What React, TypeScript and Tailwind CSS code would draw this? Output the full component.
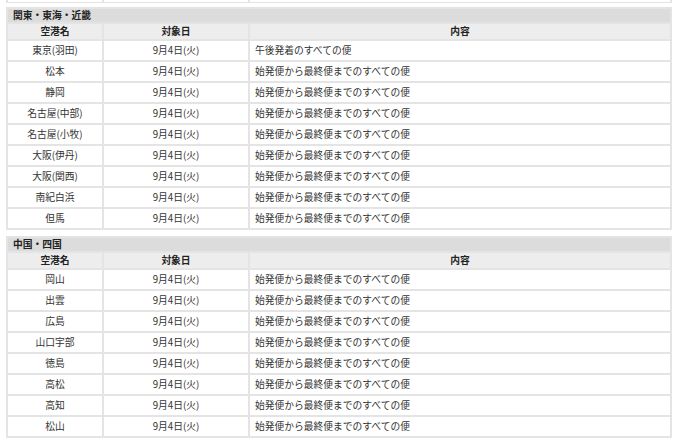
const font = { fontFamily: '"Noto Sans CJK JP", "Noto Sans", sans-serif' };

type Region = { name: string; rows: { airport: string; content: string }[] };

const all = "始発便から最終便までのすべての便";

const regions: Region[] = [
  {
    name: "関東・東海・近畿",
    rows: [
      { airport: "東京(羽田)", content: "午後発着のすべての便" },
      { airport: "松本", content: all },
      { airport: "静岡", content: all },
      { airport: "名古屋(中部)", content: all },
      { airport: "名古屋(小牧)", content: all },
      { airport: "大阪(伊丹)", content: all },
      { airport: "大阪(関西)", content: all },
      { airport: "南紀白浜", content: all },
      { airport: "但馬", content: all },
    ],
  },
  {
    name: "中国・四国",
    rows: [
      { airport: "岡山", content: all },
      { airport: "出雲", content: all },
      { airport: "広島", content: all },
      { airport: "山口宇部", content: all },
      { airport: "徳島", content: all },
      { airport: "高松", content: all },
      { airport: "高知", content: all },
      { airport: "松山", content: all },
    ],
  },
];

function Cols() {
  return (
    <colgroup>
      <col className="w-[96px]" />
      <col className="w-[146px]" />
      <col />
    </colgroup>
  );
}

function RegionTable({ region }: { region: Region }) {
  return (
    <table className="w-[666px] table-fixed border-collapse text-[9.75px] text-[#333]">
      <Cols />
      <thead>
        <tr className="h-[15px] bg-[#dcdcdc]">
          <th colSpan={3} className="border-2 border-[#e4e4e4] px-[5px] py-0 text-left font-bold leading-none text-[#222]">
            {region.name}
          </th>
        </tr>
        <tr className="h-[17px] bg-[#ededed]">
          <th className="border-2 border-[#e4e4e4] p-0 font-bold leading-none text-[#222]">空港名</th>
          <th className="border-2 border-[#e4e4e4] p-0 font-bold leading-none text-[#222]">対象日</th>
          <th className="border-2 border-[#e4e4e4] p-0 font-bold leading-none text-[#222]">内容</th>
        </tr>
      </thead>
      <tbody>
        {region.rows.map((r) => (
          <tr key={r.airport} className="h-[21px] bg-white">
            <td className="border-2 border-[#e4e4e4] p-0 text-center leading-none">{r.airport}</td>
            <td className="border-2 border-[#e4e4e4] p-0 text-center leading-none">9月4日(火)</td>
            <td className="border-2 border-[#e4e4e4] py-0 pl-[5px] leading-none">{r.content}</td>
          </tr>
        ))}
      </tbody>
    </table>
  );
}

export default function App() {
  return (
    <div className="h-[444px] w-[680px] overflow-hidden bg-white" style={font}>
      {/* tail of the previous table */}
      <div className="ml-[6px] h-[3px] overflow-hidden">
        <table className="-mt-[19px] w-[666px] table-fixed border-collapse">
          <Cols />
          <tbody>
            <tr className="h-[21px]">
              <td className="border-2 border-[#e4e4e4]" />
              <td className="border-2 border-[#e4e4e4]" />
              <td className="border-2 border-[#e4e4e4]" />
            </tr>
          </tbody>
        </table>
      </div>
      <div className="ml-[6px] mt-[4px] flex flex-col gap-[6px]">
        {regions.map((r) => (
          <RegionTable key={r.name} region={r} />
        ))}
      </div>
    </div>
  );
}
